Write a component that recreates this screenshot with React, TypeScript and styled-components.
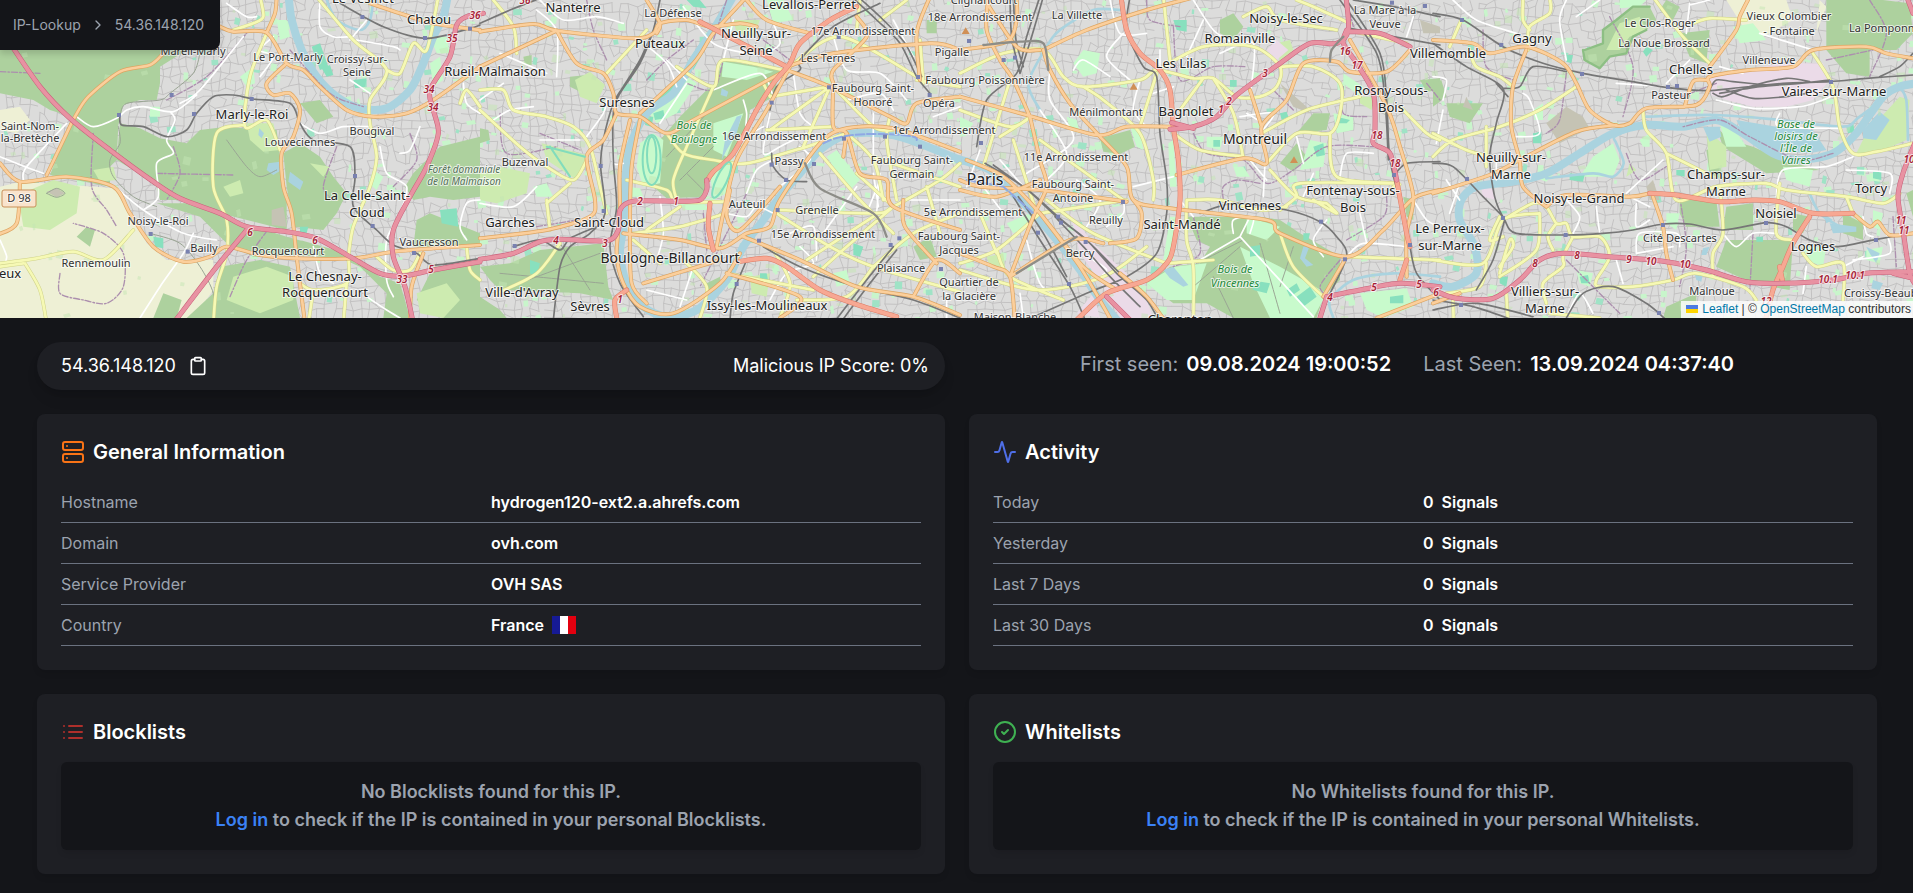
import React from "react";
import styled, { createGlobalStyle } from "styled-components";
import { Activity, ChevronRight, CircleCheck, Clipboard, Server } from "lucide-react";

const GlobalStyle = createGlobalStyle`
  *, *::before, *::after { box-sizing: border-box; }
  body {
    margin: 0;
    background: #141519;
    color: #fff;
    font-family: Inter, "Liberation Sans", sans-serif;
    font-size: 16px;
    line-height: 24px;
  }
`;

/* ---------- map data ---------- */

/* Map geometry is stored per sheet, three units to the pixel. */
type Layer =
  | "farm" | "forest" | "grass" | "park" | "pitch" | "yard" | "brown" | "lake"
  | "river" | "canal" | "motorway" | "trunk" | "primary" | "secondary"
  | "street" | "rail" | "viaduct" | "border" | "track";

type Sheet = {
  x: number;
  layers: Partial<Record<Layer, string[]>>;
  stations: string;
  peaks?: string;
};

const sheets: Sheet[] = [
  {
    x: 0,
    layers: {
      farm: [
        "0,560 60,545 350,565 400,650 440,730 500,780 640,780 640,870 580,954 0,954",
        "605,590 650,520 700,470 760,500 800,560 815,670 740,650 660,620",
        "0,330 60,320 90,360 50,400 0,390",
      ],
      forest: [
        "0,150 230,150 560,150 480,200 480,250 470,300 420,300 370,315 355,375 350,480 330,500 330,560 150,525 200,400 215,350 150,330 100,300 0,280",
        "360,370 420,385 480,415 560,430 600,390 680,380 730,385 830,390 840,470 860,600 860,690 660,640 560,600 480,600 470,560 400,510 350,480",
        "850,460 900,430 960,470 1000,530 1040,580 1010,640 970,690 880,680 860,560",
        "1240,520 1320,440 1440,410 1440,590 1360,600 1290,590 1240,600 1215,560",
        "470,610 560,610 700,660 860,710 1040,760 1040,775 880,765 760,770 680,730 600,650",
        "660,800 780,780 870,800 900,954 560,954 640,880",
        "900,720 1040,760 1140,830 1200,850 1230,954 1150,954 1160,880 1080,800",
        "490,880 545,900 530,954 460,954",
        "1250,660 1290,640 1440,700 1440,740 1240,740",
        "900,310 960,300 1000,350 950,370",
        "1300,800 1440,790 1440,954 1330,954 1250,900",
        "230,710 260,680 285,690 270,740",
      ],
      grass: [
        "60,620 90,570 160,540 240,560 230,640 150,690 70,680",
        "700,830 800,800 880,830 880,900 780,940 680,900",
        "740,370 820,370 840,450 790,455 750,420",
        "280,510 340,500 350,540 300,545",
        "1250,880 1340,850 1380,900 1330,954 1260,940",
        "670,560 720,540 730,580 690,590",
        "930,490 990,500 970,530",
      ],
      park: [
        "830,60 860,60 870,110 840,120", "1290,190 1320,170 1330,240 1300,260",
        "450,320 480,320 480,350 450,350", "1120,510 1150,530 1130,570 1105,550",
        "1290,110 1340,110 1350,160 1310,160", "720,230 760,200 765,250 740,260",
      ],
      pitch: [
        "935,140 960,130 985,200 960,210", "1060,240 1100,235 1095,260 1065,265",
        "1320,630 1370,625 1375,680 1325,670", "460,710 490,715 490,745 465,740",
        "900,680 925,680 920,700 900,700", "965,205 990,195 1000,225 980,230",
      ],
      brown: ["815,630 850,620 860,680 815,675", "140,575 170,565 195,580 170,592"],
      lake: [
        "805,490 840,485 845,510 820,525 800,510", "870,515 910,545 900,570 865,545",
        "778,385 792,400 785,415 775,405",
      ],
      river: ["865,-20 875,60 905,150 950,230 1010,290 1080,325 1160,325 1230,270 1270,190 1300,110 1330,50 1345,-20"],
      canal: ["980,0 1010,60 1080,90 1110,60 1120,0"],
      motorway: [
        "30,130 120,260 210,355 330,450 460,545 540,595 660,640 740,680 860,695 950,715 1050,770 1140,820 1210,828 1300,810 1440,785",
        "740,690 650,800 520,970",
        "1450,40 1400,50 1370,75 1350,170 1290,270 1300,330 1315,400 1280,500 1230,590 1180,690 1180,770 1215,860 1240,970",
      ],
      primary: [
        "0,490 60,545 200,530 340,560 390,640 460,740 550,785 630,770 680,740 780,765 880,775 1060,775 1180,755 1300,745 1440,735",
        "140,525 200,400 225,350 265,290 360,215 450,195 490,160",
        "660,80 700,95 800,98 860,190 910,210 960,260 1040,330 1120,350 1220,340 1300,300 1440,200",
        "800,98 825,40 830,-10",
        "860,190 800,250 820,285 870,280 900,330 880,410 845,460 850,560 875,640 890,770 915,970",
        "-10,705 50,670 60,545", "1110,10 1200,40 1300,70 1440,90",
        "1230,970 1235,860 1270,760",
      ],
      secondary: [
        "0,790 110,775 220,755 310,780 400,690", "75,790 120,870 140,970",
        "730,375 650,400 640,560 680,660 680,760 650,860 640,970",
        "800,100 750,230 735,380 800,360 840,450",
        "950,-10 1060,120 1160,210 1110,300 1110,370 1130,470 1110,560 1060,680 1045,770",
        "1160,210 1200,220 1240,130 1280,150 1315,-10",
        "900,850 940,870 1040,850 1045,770", "940,870 925,970", "1130,770 1180,810 1230,810 1260,760",
        "1040,850 1030,970", "780,-10 790,50 760,70 700,90", "1380,310 1400,270 1440,320",
        "1400,740 1410,810 1440,840", "0,800 70,790",
      ],
      street: [
        "70,540 80,500 200,370", "0,470 75,500 130,520", "230,350 280,380 350,355 380,330 430,320 520,335 590,285",
        "510,335 525,360 500,420 520,460 470,490 475,590 430,630",
        "350,565 430,630 550,700 650,720", "580,700 550,760 480,860 420,954",
        "900,370 960,400 1030,380 1110,380", "820,110 780,150 820,170 780,230",
        "1140,440 1160,520 1220,560 1200,640 1160,720 1160,840 1180,890", "680,10 740,50 770,50",
        "0,720 20,770 10,800", "1390,250 1400,310 1440,340", "1440,600 1400,610 1380,680 1400,720",
        "960,0 960,80 1000,110 1050,110", "1050,240 1110,280", "1070,120 1180,140 1200,150",
        "940,740 960,820 1000,850", "1100,890 1160,930 1200,954", "540,310 600,270 730,110",
        "1200,460 1230,450 1260,380", "1050,120 1100,60",
      ],
      rail: [
        "360,345 365,375 430,380 500,410 560,390 590,340 640,290 700,285 760,297 870,310 900,370 940,420 1050,440 1065,530 1060,620 1130,690 1180,735 1250,760 1300,795 1440,775",
        "1020,10 1150,80 1280,115 1410,85 1440,75",
      ],
      track: [
        "360,345 380,310 480,300 510,280 580,220 600,160", "355,380 360,430 330,480 340,530 400,590 470,620",
        "450,700 540,730 600,800 640,880 640,954", "680,420 740,500 780,530 830,510",
        "140,580 170,565 195,580 170,592 140,580",
      ],
      border: [
        "280,400 275,560 320,630 350,680", "470,520 700,525", "520,440 540,520 500,600",
        "180,820 180,880 250,900 320,910 370,860 370,760 310,700 220,670",
        "500,300 620,230 740,100", "690,890 740,780 810,680", "0,215 120,220", "1010,440 970,560 1000,600",
        "870,150 990,280 1090,320", "1230,400 1250,480 1180,560",
      ],
    },
    stations:
      "515,285 582,342 357,345 755,297 452,702 563,755 1065,528 1118,678 1242,759 1087,51 1275,114 1410,86",
  },
  {
    x: 1440,
    layers: {
      forest: [
        "730,180 900,210 880,290 810,330 800,400 760,470 690,530 680,590 560,595 520,560 540,420 600,350 680,270 700,260",
        "0,800 90,790 180,750 370,730 385,860 400,900 300,880 60,870 30,840",
        "0,890 60,930 80,954 0,954",
        "1300,740 1350,710 1370,770 1320,780", "1340,60 1370,60 1370,100 1340,100",
        "130,170 155,165 155,195 135,195", "270,230 320,225 310,280 270,260",
        "680,850 720,830 720,880 690,890", "0,385 25,390 30,420 0,430",
      ],
      grass: [
        "0,520 60,500 150,520 140,580 50,610 0,600", "285,240 330,215 375,255 350,310 300,290",
        "185,430 320,465 290,540 200,480", "760,60 840,60 820,110 770,100",
        "810,830 870,820 860,890 815,880",
      ],
      park: [
        "480,430 520,400 550,420 540,550 490,560 470,500", "730,185 820,200 880,215 800,240 725,230",
        "700,370 760,350 790,340 740,470 700,450", "690,520 760,470 740,580 700,600",
        "500,330 560,290 620,230 650,250 590,340 530,370", "1040,470 1070,450 1140,540 1110,570",
        "860,0 910,0 940,60 880,70", "590,610 670,610 690,630 620,630",
        "160,560 200,550 220,590 170,590", "1060,820 1100,810 1110,850 1070,860",
        "440,560 480,565 490,590 450,590",
      ],
      pitch: [
        "530,290 600,230 615,240 550,310", "620,190 660,130 680,140 640,210",
        "520,340 550,330 555,355 525,360", "840,820 860,820 865,845 840,845",
        "620,0 660,0 680,25 640,20", "150,780 180,790 170,830 150,820",
        "1120,730 1150,740 1140,770 1120,765", "500,350 520,350 515,380 495,375",
      ],
      lake: ["735,420 770,350 785,345 770,400 740,450 725,480", "725,265 745,275 740,290 722,285"],
      river: [
        "765,-20 700,90 640,180 580,280 500,340 450,440 435,560 430,680 420,760 440,850 490,920 560,950 650,930 740,840 790,740 850,660 900,590 960,520 1020,450 1100,405 1200,400 1290,420 1445,482",
      ],
      motorway: ["0,778 100,760 180,725 240,718 380,722 415,690 420,630 460,604 600,604 660,600 680,570 680,540"],
      trunk: [
        "680,545 700,515 760,460 830,330 880,250 930,190 960,130 1050,60 1130,20", "660,65 920,200",
        "690,610 685,680 700,750", "775,785 860,775 920,800 1020,870 1120,910 1250,950",
        "410,954 405,900 440,870",
      ],
      primary: [
        "0,95 160,72 230,92 460,115 520,100 540,70 620,60 690,80 780,70 830,80",
        "0,200 230,92", "230,92 290,190 370,220 400,280 410,340 480,350 560,400 640,360 920,210",
        "920,210 1050,260 1230,350 1280,370 1310,310 1440,290", "480,340 640,190 700,100 800,-10",
        "410,340 370,420 320,470 345,600 330,650 200,690 0,715",
        "450,360 420,500 420,640 410,760 430,850 480,920 580,940 720,850 780,760",
        "480,360 455,500 450,680 455,850 500,910",
        "930,200 860,330 770,480 730,640 710,740", "430,700 600,720 720,745 800,700 870,680 900,600 1020,430 1100,385 1240,385 1440,455",
        "750,570 740,650 780,690 900,560", "1060,250 1060,380 1100,400 1140,520 1220,540 1240,620 1440,690",
        "790,710 960,780 1130,860 1300,890 1440,945", "490,850 720,780", "740,820 960,890 900,954",
        "920,200 1060,160 1350,130 1440,150", "1060,250 1060,210 1160,110 1130,50",
        "1350,-10 1310,100 1320,240", "1300,890 1370,780 1440,820", "800,0 860,60 990,100",
        "500,0 540,70 530,100", "1270,600 1275,680 1370,790", "1100,400 1090,470",
      ],
      secondary: [
        "0,330 120,440 200,500 280,540 320,480", "0,270 70,270 100,330 200,350 280,380 330,440 360,560 380,640",
        "40,0 100,80 110,160", "560,400 610,460 700,480 800,490 980,440 1100,400", "700,260 620,440 580,540 590,600",
        "870,290 1050,260", "1050,260 870,390", "860,390 1060,380", "1050,260 970,440", "1060,260 1180,380 1240,390",
        "930,200 1080,110 1310,230", "850,250 870,290", "1100,400 1180,480 1210,600", "1020,460 1140,600 1240,700",
        "1130,520 1240,620", "900,630 1180,640 1240,620 1380,540 1440,490", "1000,830 1100,740 1240,620",
        "890,640 1050,740 1180,800 1440,875", "980,780 1180,650", "460,700 600,680 740,640",
        "460,720 540,790", "500,690 600,620", "740,820 1000,870", "880,750 930,850 900,954",
        "240,730 170,820 50,880", "1180,800 1300,700 1440,640", "200,600 210,690", "270,550 200,610",
        "1310,240 1440,260", "1320,120 1330,250", "440,540 560,570 590,605 730,605", "380,220 500,90",
        "590,200 700,260 730,180 910,210", "1140,0 1130,90", "1230,350 1220,420 1250,600", "1180,470 1440,560",
        "610,780 680,860 660,954", "1200,60 1280,0", "950,900 1100,890 1180,800", "1340,560 1380,700",
      ],
      street: [
        "230,230 230,92 170,30", "620,250 540,370", "700,270 840,220 880,290", "790,300 800,340 800,400 850,380",
        "800,580 830,510 880,480", "900,560 990,480 960,440", "730,180 760,60", "60,160 200,220", "320,410 370,340 380,300",
        "1180,340 1180,480", "1200,540 1160,640", "870,900 920,820 1000,790 960,740", "600,920 640,800",
        "540,590 550,700 530,780", "400,430 400,490 430,490", "40,360 90,330 160,320", "740,640 800,650 830,620 880,640",
        "870,340 850,460 900,440 980,400", "940,220 960,340 1000,380", "180,0 250,60 350,50 430,70",
        "0,300 70,250", "0,610 100,620 170,560", "500,870 620,900", "1060,110 1100,210 1200,220 1280,300",
        "1100,300 1200,280 1240,330", "1360,350 1440,320", "560,180 620,240", "610,20 700,130 800,160",
        "1240,60 1300,170", "930,700 1000,680 1010,780", "1290,600 1440,600", "300,420 180,420",
        "1180,520 1195,620", "1200,520 1190,640", "1400,880 1400,954", "1030,700 1130,560",
        "480,120 560,190 590,260", "860,160 900,130 880,70",
      ],
      rail: [
        "520,90 480,180 430,260 400,310 370,420 362,500 375,640 330,700 270,740 240,800 220,960",
        "540,0 520,90 480,190 420,280 400,340 400,480 410,620 390,740 420,850 490,950", "0,70 90,30 180,-5",
        "1240,740 1160,840 1060,970", "1250,750 1170,850 1080,970", "850,740 960,800 1130,860 1300,900 1440,954",
        "800,780 760,880 750,960", "100,740 180,720 240,750 270,715 350,680",
        "870,330 890,260 960,210 960,180 1060,80 1200,10", "875,460 880,500 920,540 980,545",
        "1125,0 1190,60 1260,130 1310,230 1350,280", "1145,0 1210,60 1275,130 1325,230",
      ],
      viaduct: ["975,490 1020,565 1180,640 1220,710"],
      track: ["60,820 370,850", "240,730 330,870", "600,540 700,440", "620,520 680,580", "560,470 690,330", "90,860 360,760"],
      border: [
        "320,0 340,90 380,180", "500,240 560,180 640,120", "60,340 80,460 230,440", "620,250 700,270 730,180",
        "170,680 290,660", "800,580 740,700 660,860", "740,0 700,120", "670,640 680,750", "850,120 930,180",
        "180,400 300,450",
      ],
    },
    stations:
      "362,498 371,633 104,738 875,308 1047,262 1076,111 1314,231 1349,285 1092,416 1215,410 1320,440 1002,492 875,494 918,540 893,630 837,722 770,852 1232,735 1258,715 1383,807",
  },
  {
    x: 2880,
    layers: {
      forest: [
        "680,650 900,650 960,660 1020,700 1140,770 1140,840 1090,890 1070,954 820,954 740,910 640,910 560,850 630,800 720,790 750,740 710,720",
        "780,60 820,40 850,80 820,120 780,100", "960,490 1010,430 1040,470 1000,515", "1010,400 1060,340 1110,340 1100,390",
        "420,415 510,390 525,440 480,462 430,455", "1330,590 1360,600 1360,660 1340,650", "1380,240 1440,235 1440,270 1400,275",
      ],
      grass: ["950,130 990,120 1000,150 960,190", "1200,290 1240,290 1235,330 1200,310", "80,770 130,760 135,800 90,800"],
      park: [
        "340,190 370,150 420,160 410,220 370,230", "560,850 640,800 740,790 700,900 620,900",
        "840,740 960,800 1100,880 1060,954 930,954 880,850", "860,650 960,680 920,720 860,700",
        "1120,340 1180,350 1180,390 1130,400", "1200,880 1340,865 1360,920 1270,954 1220,930",
        "140,670 210,640 220,670 160,700", "320,350 350,360 360,400 330,390", "820,500 850,500 870,530 830,530",
        "1020,510 1050,420 1100,430 1090,500", "1150,220 1210,260 1200,290 1150,250", "640,420 650,560 630,560 625,430",
        "740,410 790,410 780,450 740,440", "0,350 40,370 20,400 0,390", "510,380 540,390 550,450 530,440",
        "630,650 655,650 640,780 610,780",
      ],
      pitch: [
        "640,60 680,60 680,95 650,90", "810,240 830,240 830,260 810,260", "870,740 900,735 900,765 870,770",
        "1010,890 1050,860 1070,890 1030,920", "870,840 930,850 920,880 880,870", "1030,700 1050,700 1045,720 1030,720",
        "1060,440 1090,430 1095,465 1070,470", "1130,350 1170,360 1160,370 1130,370", "980,870 1010,850 1020,870 990,890",
        "1290,890 1330,885 1330,910 1290,910", "760,420 780,420 780,440 760,440", "960,340 980,335 985,350 965,360",
      ],
      brown: ["1380,60 1440,80 1440,100 1390,100", "960,250 1040,320 1050,340 1000,320"],
      yard: [
        "920,150 950,120 985,150 950,180", "330,640 400,730 500,820 560,900 580,954 480,954 430,860 360,760",
        "350,940 400,880 420,954",
      ],
      lake: ["610,810 640,800 685,855 670,860 630,835", "1030,740 1050,735 1035,775 1060,795 1040,800 1020,775"],
      river: ["-10,476 90,510 160,580 230,650 290,720 360,810 420,900 480,970"],
      canal: ["480,30 400,30 300,90 260,140 205,250 240,330", "1440,830 1300,820 1180,840 1110,900 1120,954"],
      motorway: [
        "630,388 700,380 770,350 830,285 960,190 1050,130 1130,130 1165,90 1158,-10",
        "635,368 700,385", "1160,90 1150,130 1190,190 1240,280 1245,390 1240,430 1290,460 1310,540",
        "1170,95 1260,100 1350,140", "1100,890 1200,870 1320,850 1440,860", "1075,970 1100,890",
        "440,890 520,970",
      ],
      trunk: [
        "483,-10 500,90 540,160 600,210 630,270 640,380 655,480 660,600 640,740 620,790 560,840 440,880 350,960",
        "1310,540 1340,700 1350,740", "1320,840 1340,780",
      ],
      primary: [
        "0,290 200,345 410,405 500,380 630,380", "210,350 160,240 120,180 80,90 85,-10", "250,150 380,90 560,30 690,-5",
        "250,150 270,210 330,310 420,410 500,500 520,600 630,625 920,660 960,700 1160,770 1270,690 1360,595 1440,570",
        "0,540 60,560 240,570 500,605", "650,525 850,475 920,490 905,380 980,300 1030,190 1130,185 1170,215 1280,215 1350,150",
        "905,380 870,270", "1170,120 1280,320 1320,440 1360,590 1340,700 1340,830", "1160,770 1090,890",
        "450,730 530,715 545,640 520,600", "210,350 240,480 260,560 220,650 150,830", "20,480 130,530 240,640 370,800 470,870",
        "0,570 110,590 240,540", "480,820 560,890 620,970", "150,830 330,720 430,730", "0,760 100,800 150,830 165,970",
        "1250,954 1440,880", "75,0 170,140 240,150", "0,150 140,125 170,60 170,0", "240,640 360,800 450,954",
      ],
      secondary: [
        "0,220 130,160 250,150 310,230 370,260 540,240 590,210 700,235 760,235 830,290 900,290 950,260 960,200 880,140 730,140 610,200",
        "610,-10 630,180", "0,330 150,380 210,350", "370,260 430,300 540,400 580,540 580,600", "760,235 820,340 850,475",
        "640,400 720,450 850,470", "660,330 730,235", "920,490 1010,400 1110,400 1140,340 1140,250 1060,200 960,200",
        "905,400 1040,330 1200,290", "1110,400 1130,530 1310,550 1300,560", "930,510 1010,590 1100,610",
        "1310,550 1020,550 1010,590 960,630", "240,640 500,600", "240,420 490,600", "260,600 400,700 620,790",
        "0,790 110,750 240,640", "110,750 150,830 310,900", "70,500 150,240", "120,410 200,360",
        "0,810 230,870 430,830 560,740", "680,600 680,720 700,800 700,970", "680,600 780,600 900,630 980,620",
        "960,700 1000,800 1090,890", "620,790 760,780", "1160,770 1440,780", "1160,90 1340,130", "850,50 920,20 960,60 1130,90",
        "1320,320 1400,400 1440,420", "590,220 540,380", "60,640 110,760", "1010,0 1060,20 1170,70",
        "160,420 230,640", "0,640 90,640", "1100,610 1130,640 1060,600",
      ],
      street: [
        "270,210 270,300 340,420 200,520", "600,150 600,200", "490,100 440,170 510,240", "730,60 680,170",
        "780,160 880,130 870,290", "840,350 940,340 900,400", "915,490 910,590", "840,710 720,780", "840,710 1060,950",
        "870,650 840,710", "1240,460 1160,460 1140,530", "1010,410 1030,490", "1100,660 1060,720 1090,770",
        "1160,770 1210,730 1340,740", "520,560 640,530", "240,330 320,460 260,540", "490,600 490,640 440,680",
        "70,560 130,640", "60,450 20,560", "340,210 370,180 450,230", "700,0 760,90 820,130", "450,0 480,100 560,100",
        "860,340 910,370", "580,280 640,260", "350,540 420,600 380,680", "180,880 190,954", "1200,640 1220,730",
        "200,720 240,850 300,900", "540,240 520,330 560,380", "1030,590 1060,520", "1360,600 1400,660 1440,680",
        "1360,50 1340,110", "820,700 820,660 880,650 870,700", "120,480 190,560", "870,480 920,540", "660,600 700,650",
        "400,780 440,810 410,840",
      ],
      rail: [
        "240,-10 200,110 170,220 80,300 50,440", "250,-10 215,110 180,220", "150,-10 155,110 180,220", "160,-10 168,120 190,200",
        "510,-10 500,90 550,200 590,230 600,400 620,540 620,640 590,760 500,830 380,880 200,960",
        "75,490 190,560 290,650 380,720 470,820 560,900 600,970", "100,495 210,575 300,655 390,730 480,820 580,910",
        "285,650 370,740 450,830 540,920", "160,590 240,720 330,860 380,970", "175,590 250,700 320,830",
        "720,640 820,610 980,630 1080,665 1130,710 1160,770 1100,900", "1160,0 1260,160 1280,300 1290,480 1330,640 1350,740 1370,820 1440,900",
        "1140,0 1250,160 1275,300 1285,480", "1180,0 1300,20 1440,50", "1170,85 1300,110 1440,135", "1300,530 1340,490 1440,485",
      ],
      viaduct: ["70,135 180,125 250,130 265,210", "170,820 350,710", "1110,185 1115,150 1150,110"],
      track: ["760,830 820,954", "710,790 850,720", "900,730 960,940", "700,860 840,740", "1000,740 960,860"],
      border: [
        "560,0 570,60 660,80", "640,80 660,240 760,200 860,200", "700,400 740,460 850,480 920,550 1000,510 1100,440 1240,440",
        "790,600 790,560 830,540 900,550", "1160,0 1180,80", "700,650 720,760 640,800", "1150,260 1150,340 1220,350",
        "1140,780 1080,860 1120,900", "1280,590 1270,650 1160,720", "1400,250 1440,300", "940,270 1000,330",
      ],
    },
    stations:
      "131,180 165,173 27,123 63,429 489,606 303,668 294,650 377,726 234,698 327,852 1083,665 1155,778 1302,525 1350,735 1296,8 1395,18",
    peaks: "17,93 521,260 1002,480",
  },
  {
    x: 4299,
    layers: {
      farm: ["880,0 1060,0 1080,60 990,110 930,80", "540,80 600,80 590,130 540,130", "1160,0 1180,20 1150,100"],
      forest: [
        "550,60 600,20 650,20 670,60 640,90 600,110 580,160 530,170 500,205 450,180 455,150 510,130 510,90",
        "1180,0 1350,0 1360,80 1310,150 1310,230 1240,220 1180,150", "1350,0 1430,10 1440,100 1390,150 1310,150",
        "40,310 150,310 110,370 50,350", "740,100 830,90 820,190 770,170", "850,380 890,420 960,440 1050,480 1160,510 1000,520 870,440",
        "880,620 960,610 960,690 870,690", "880,720 1080,720 1070,870 960,850 850,800", "740,590 850,600 860,680 760,680 740,640",
        "700,920 790,880 790,954 690,954", "1420,580 1440,570 1440,650", "700,0 740,20 720,60 680,30",
        "1080,640 1130,650 1110,700 1080,690", "820,450 850,440 870,540 830,520", "1230,640 1290,670 1290,720 1230,700",
        "0,250 25,240 40,290 0,320",
      ],
      grass: [
        "560,70 620,50 640,90 590,110 560,150 520,150", "820,390 880,440 880,500 830,510",
        "1270,460 1300,400 1400,290 1430,300 1420,420 1330,460", "590,490 610,510 580,530",
      ],
      park: [
        "480,470 540,430 560,480 540,530 440,530", "300,530 360,525 340,545", "860,370 900,380 940,440 880,440",
        "1050,500 1140,510 1130,560 1060,540", "1110,740 1180,740 1170,800 1120,780", "300,330 330,310 330,360 305,360",
        "620,420 650,400 650,440 630,440", "700,640 740,640 730,690 700,670", "1320,630 1350,640 1340,690 1320,680",
        "900,80 960,70 1000,120 920,130", "1310,520 1340,520 1340,545 1310,540", "430,810 480,820 470,860 440,850",
        "1300,750 1350,740 1340,790 1300,780", "560,0 640,0 620,20 560,25",
      ],
      pitch: [
        "300,400 325,395 325,430 300,430", "410,520 455,525 450,545 410,540", "1240,380 1260,365 1265,395 1245,400",
        "640,140 660,150 640,170 630,155", "1320,515 1345,515 1345,540 1320,535", "200,830 225,830 220,860 200,850",
        "970,710 990,710 990,725 970,725", "400,165 420,165 415,190 400,185", "730,510 755,510 755,530 730,525",
        "440,830 465,825 470,850 445,850",
      ],
      yard: ["830,230 900,215 1050,190 1170,190 1190,240 1140,300 1060,320 960,320 880,300 835,285", "140,540 180,570 190,600 150,590"],
      brown: ["340,370 400,320 450,350 470,385 380,430", "100,290 120,330 90,320", "640,560 660,540 680,600 650,600"],
      lake: [
        "910,360 1030,380 1140,390 1180,450 1130,460 1000,450 930,400", "1290,390 1340,335 1370,360 1330,420 1290,415",
        "810,380 860,380 865,410 830,425", "810,745 830,740 820,765 805,765", "1320,840 1350,850 1340,870 1315,865",
        "785,820 810,820 805,845 790,840", "1170,640 1200,660 1180,670", "1190,670 1270,680 1270,695 1200,700",
        "1300,740 1340,760 1330,790 1310,760",
      ],
      river: [
        "0,850 60,860 130,820 125,740 80,660 85,600 130,560 240,545 340,520 440,460 540,400 640,375 750,380 850,360 930,400 1020,460 1100,480 1200,460 1270,400 1350,290 1400,260 1450,250",
      ],
      canal: [
        "640,350 850,345 1040,360 1230,380 1280,350 1400,260", "340,535 480,520 540,530 572,490 550,430 545,410 600,385",
        "1400,260 1420,300 1425,420", "1130,580 1160,640 1220,680",
      ],
      motorway: [
        "0,870 70,895 180,895 260,840 320,780 390,760 530,770 700,785 820,810 940,845 1050,850 1200,840 1300,820 1450,815",
        "1445,430 1410,520 1395,590 1410,690 1430,820 1445,850", "1425,0 1440,40", "1380,820 1440,835",
      ],
      trunk: ["650,580 730,585 860,605 960,600 1040,605 1140,640 1260,640", "1130,650 1080,730 1050,800 1020,870 995,970", "1040,800 1050,850"],
      primary: [
        "0,120 120,130 170,160 280,140 390,190 430,250 470,330 540,375 590,370 640,325 790,315 830,260 830,230 950,210 1080,200 1140,150 1300,140 1360,160 1440,175",
        "755,320 780,245 820,240", "830,200 910,90 920,50 950,-10", "280,150 240,260 235,380 260,480 270,560 340,620",
        "0,580 170,525 260,480 430,395 550,375", "340,620 400,585 590,590 650,580", "660,590 690,680 700,760 720,840",
        "1260,640 1310,680 1335,665 1370,705 1440,700", "0,910 80,880",
      ],
      secondary: [
        "660,-10 750,110 830,190", "780,70 830,55 940,60", "350,-10 350,40 290,80 285,150", "85,60 50,140",
        "270,0 270,60 290,90", "110,150 130,200 200,230 240,260", "430,260 320,330 200,380 60,420 0,470", "0,400 100,450 170,470",
        "630,330 640,390 700,460 730,600 850,560 1000,550 1060,570 1240,590 1350,610 1400,580", "700,460 840,530",
        "1140,160 1200,260 1220,380 1260,460 1330,455 1440,430", "1040,550 1030,700 1080,720", "860,560 870,700 840,760 840,830",
        "210,660 300,610 340,620 370,670 400,670 420,710 500,710 530,770 490,840 500,860 600,860 720,840 790,820 930,860 970,900",
        "0,780 150,790 210,660 320,640", "210,710 170,720 200,650", "370,670 345,710 360,750", "420,710 390,770 390,800 330,850 340,910",
        "200,820 230,720 240,740 200,800", "1110,760 1150,800 1230,790 1230,900", "1240,590 1260,640", "225,970 220,880",
        "40,880 140,860 160,790", "62,970 60,890", "160,380 160,500", "350,940 500,954", "320,640 310,750 200,830",
      ],
      street: [
        "400,0 380,60 400,180", "770,10 760,100", "770,15 830,0", "690,480 580,580", "610,760 620,700 730,700 740,740",
        "850,300 960,325 1100,320 1170,300 1210,280", "1030,590 1050,510 1180,500 1260,470", "1120,800 1110,880",
        "870,700 910,740 960,700 1030,700", "490,620 500,700", "550,780 570,850", "60,0 130,60 250,100",
        "250,410 320,400 290,300 270,280", "0,230 40,240 30,300", "10,430 30,330", "400,954 440,880 480,940",
        "1260,780 1370,760 1360,700", "590,590 650,620", "80,550 50,640", "700,250 770,180", "860,200 930,220",
        "1240,510 1370,520 1370,580", "1290,650 1300,700 1320,710", "610,760 720,740", "550,250 700,260", "980,100 1140,150",
        "1040,340 1040,380 1220,385", "1230,800 1290,770", "400,600 440,650 420,700", "40,540 80,600", "610,610 610,680 650,660",
        "190,480 190,540", "500,0 430,50",
      ],
      rail: [
        "0,40 90,60 210,140 330,190 450,220 600,245 700,262 820,272 900,265 1050,250 1190,245 1300,235 1440,225",
        "830,270 850,240 900,245 1000,255", "840,280 870,290 950,260 1060,235 1130,245",
        "880,270 960,295 1060,290 1120,280", "860,280 980,260 1100,250 1190,240", "1340,230 1400,200 1440,160",
        "0,130 100,200 210,265 190,370 170,470 185,590 215,660 250,700 400,705 510,700 600,690 690,672 770,672 870,690 1000,668 1060,680 1130,720 1210,740 1330,718 1440,700",
        "210,265 260,260 300,200 400,215", "0,490 60,500 150,590 210,650", "215,660 180,780 130,870",
        "400,954 450,880 540,860 640,910 700,960", "0,900 120,920 240,960", "0,930 130,910 300,950", "190,250 225,290",
      ],
      border: [
        "150,90 160,200 240,240", "400,220 380,360 340,400", "530,50 600,200 570,350", "580,460 620,540 700,500",
        "960,700 950,880", "740,590 760,740 740,860", "1180,180 1320,150", "1200,460 1100,480 950,410 860,360 750,380",
        "1310,0 1360,100 1310,230", "1380,650 1390,800", "400,780 480,860 560,940", "850,250 720,300",
      ],
    },
    stations:
      "87,60 205,135 447,222 705,261 732,258 1194,246 102,537 210,654 398,705 690,675 999,669 1329,720 84,915 678,939",
  },
];

type LabelKind = "capital" | "city" | "town" | "village" | "wood" | "forest" | "exit";
type Label = [text: string, x: number, y: number, kind?: LabelKind];

/* Names carry their centre in map pixels. */
const labels: Label[] = [
  ["Le Vésinet", 363, -2, "town"], ["Chatou", 429, 19, "town"], ["Mareil-Marly", 193, 51],
  ["Le Port-Marly", 288, 57], ["Croissy-sur-", 357, 59], ["Seine", 357, 72], ["Marly-le-Roi", 252, 114, "town"],
  ["Saint-Nom-", 30, 126], ["la-Bretèche", 30, 138], ["Bougival", 372, 131], ["Louveciennes", 300, 142],
  ["La Celle-Saint-", 367, 195, "town"], ["Cloud", 367, 212, "town"], ["Noisy-le-Roi", 158, 221],
  ["Bailly", 204, 248], ["Rennemoulin", 96, 263], ["Rocquencourt", 288, 251], ["Vaucresson", 429, 242],
  ["eux", 10, 273, "town"], ["Le Chesnay-", 325, 276, "town"], ["Rocquencourt", 325, 292, "town"],
  ["Forêt domaniale", 464, 169, "forest"], ["de la Malmaison", 464, 181, "forest"],
  ["Nanterre", 573, 7, "town"], ["La Défense", 673, 13], ["Levallois-Perret", 809, 4, "town"],
  ["Rueil-Malmaison", 495, 71, "town"], ["Puteaux", 660, 43, "town"], ["Neuilly-sur-", 756, 33, "town"],
  ["Seine", 756, 50, "town"], ["17e Arrondissement", 863, 31], ["Les Ternes", 828, 58],
  ["18e Arrondissement", 980, 17], ["Pigalle", 952, 52], ["Suresnes", 627, 102, "town"],
  ["Faubourg Saint-", 873, 88], ["Honoré", 873, 102], ["Faubourg Poissonnière", 985, 80], ["Opéra", 939, 103],
  ["Bois de", 694, 125, "wood"], ["Boulogne", 694, 139, "wood"], ["16e Arrondissement", 774, 136],
  ["1er Arrondissement", 944, 130], ["Buzenval", 525, 162], ["Passy", 789, 161], ["Faubourg Saint-", 912, 160],
  ["Germain", 912, 174], ["Auteuil", 747, 204], ["Grenelle", 817, 210], ["5e Arrondissement", 973, 212],
  ["Garches", 510, 222, "town"], ["Saint-Cloud", 609, 222, "town"], ["15e Arrondissement", 823, 234],
  ["Faubourg Saint-", 959, 236], ["Jacques", 959, 250], ["Boulogne-Billancourt", 670, 258, "city"],
  ["Plaisance", 901, 268], ["Ville-d'Avray", 522, 292, "town"], ["Sèvres", 590, 306, "town"],
  ["Issy-les-Moulineaux", 767, 305, "town"], ["Quartier de", 969, 282], ["la Glacière", 969, 296],
  ["Clignancourt", 984, 0], ["La Villette", 1077, 15], ["Noisy-le-Sec", 1286, 18, "town"], ["Romainville", 1240, 38, "town"],
  ["La Mare à la", 1385, 10], ["Veuve", 1385, 24], ["Les Lilas", 1181, 63, "town"], ["Ménilmontant", 1106, 112],
  ["Bagnolet", 1186, 111, "town"], ["Rosny-sous-", 1391, 90, "town"], ["Bois", 1391, 107, "town"],
  ["Montreuil", 1255, 139, "city"], ["11e Arrondissement", 1076, 157], ["Paris", 985, 179, "capital"],
  ["Faubourg Saint-", 1073, 184], ["Antoine", 1073, 198], ["Fontenay-sous-", 1353, 190, "town"],
  ["Bois", 1353, 207, "town"], ["Vincennes", 1250, 205, "town"], ["Reuilly", 1106, 220],
  ["Saint-Mandé", 1182, 224, "town"], ["Bercy", 1080, 253], ["Bois de", 1235, 269, "wood"], ["Vincennes", 1235, 283, "wood"],
  ["Maison-Blanche", 1015, 317], ["Charenton", 1180, 319, "town"], ["Villemomble", 1448, 53, "town"],
  ["Le Perreux-", 1450, 228, "town"], ["sur-Marne", 1450, 245, "town"],
  ["Gagny", 1532, 38, "town"], ["Le Clos-Roger", 1660, 23], ["La Noue Brossard", 1664, 43],
  ["Vieux Colombier", 1789, 16], ["- Fontaine", 1789, 31], ["La Pomponnette", 1892, 28], ["Villeneuve", 1769, 60],
  ["Chelles", 1691, 69, "town"], ["Pasteur", 1671, 95], ["Vaires-sur-Marne", 1834, 91, "town"],
  ["Base de", 1796, 124, "wood"], ["loisirs de", 1796, 136, "wood"], ["l'Île de", 1796, 148, "wood"], ["Vaires", 1796, 160, "wood"],
  ["Neuilly-sur-", 1511, 157, "town"], ["Marne", 1511, 174, "town"], ["Noisy-le-Grand", 1579, 198, "town"],
  ["Champs-sur-", 1726, 174, "town"], ["Marne", 1726, 191, "town"], ["Torcy", 1871, 188, "town"],
  ["Noisiel", 1776, 213, "town"], ["Cité Descartes", 1680, 238], ["Lognes", 1813, 246, "town"],
  ["Villiers-sur-", 1545, 291, "town"], ["Marne", 1545, 308, "town"], ["Malnoue", 1712, 291], ["Croissy-Beaubourg", 1893, 293],
  ["36", 475, 15, "exit"], ["35", 452, 38, "exit"], ["34", 429, 89, "exit"], ["34", 433, 107, "exit"],
  ["6", 250, 232, "exit"], ["6", 315, 240, "exit"], ["5", 431, 269, "exit"], ["33", 402, 279, "exit"],
  ["36", 525, 0, "exit"], ["2", 640, 201, "exit"], ["1", 676, 201, "exit"], ["4", 556, 240, "exit"],
  ["3", 605, 243, "exit"], ["1", 620, 299, "exit"], ["3", 1265, 73, "exit"], ["2", 1229, 101, "exit"],
  ["1", 1221, 109, "exit"], ["16", 1345, 51, "exit"], ["17", 1357, 65, "exit"], ["18", 1377, 135, "exit"],
  ["18", 1395, 163, "exit"], ["4", 1330, 297, "exit"], ["5", 1374, 287, "exit"], ["5", 1419, 284, "exit"],
  ["6", 1436, 292, "exit"], ["8", 1535, 263, "exit"], ["8", 1577, 255, "exit"], ["9", 1629, 259, "exit"],
  ["10", 1651, 261, "exit"], ["10", 1685, 264, "exit"], ["10.1", 1828, 279, "exit"], ["10.1", 1855, 275, "exit"],
  ["11", 1901, 220, "exit"], ["11", 1904, 230, "exit"], ["12", 1766, 301, "exit"], ["10", 1909, 159, "exit"],
];

/* ---------- map drawing ---------- */

const areaColors: [Layer, string][] = [
  ["farm", "#eef0d5"], ["forest", "#add19e"], ["grass", "#cdebb0"], ["park", "#c8facc"],
  ["yard", "#ebdbe8"], ["brown", "#c5c3b4"], ["pitch", "#88e0be"], ["lake", "#aad3df"],
];

const lineStyles: { layer: Layer; color: string; width: number; dash?: string }[] = [
  { layer: "river", color: "#aad3df", width: 24 },
  { layer: "canal", color: "#aad3df", width: 8 },
  { layer: "track", color: "#9aa594", width: 3 },
  { layer: "border", color: "#ac8fae", width: 4, dash: "18 6 5 6" },
  { layer: "street", color: "#ffffff", width: 5 },
  { layer: "secondary", color: "#cfd28a", width: 11 },
  { layer: "secondary", color: "#f6f9b4", width: 8 },
  { layer: "rail", color: "#767676", width: 5 },
  { layer: "primary", color: "#dda562", width: 12 },
  { layer: "primary", color: "#fbcf9c", width: 8 },
  { layer: "trunk", color: "#dd7c66", width: 15 },
  { layer: "trunk", color: "#f7a893", width: 12 },
  { layer: "motorway", color: "#c9607a", width: 15 },
  { layer: "motorway", color: "#e892a2", width: 12 },
  { layer: "viaduct", color: "#8d8d88", width: 7 },
];

type Point = [number, number];

const parse = (text: string): Point[] =>
  text.split(" ").map((pair) => pair.split(",").map(Number) as Point);

/* Catmull-Rom curve through the points, for roads, rivers and rails. */
function curve(text: string): string {
  const p = parse(text);
  let d = `M${p[0]}`;
  for (let i = 0; i < p.length - 1; i++) {
    const a = p[i - 1] ?? p[i];
    const b = p[i];
    const c = p[i + 1];
    const e = p[i + 2] ?? c;
    const c1 = [b[0] + (c[0] - a[0]) / 7, b[1] + (c[1] - a[1]) / 7];
    const c2 = [c[0] - (e[0] - b[0]) / 7, c[1] - (e[1] - b[1]) / 7];
    d += `C${c1} ${c2} ${c}`;
  }
  return d;
}

const polygon = (text: string) => `M${text.split(" ").join("L")}Z`;

function random(seed: number) {
  let state = seed;
  return () => {
    state = (state * 1664525 + 1013904223) % 4294967296;
    return state / 4294967296;
  };
}

/* Fine net of side streets: a jittered lattice with some links left out. */
function sideStreets(): string {
  const next = random(7);
  const step = 25;
  const cols = 232;
  const rows = 40;
  const node: Point[][] = [];
  for (let r = 0; r < rows; r++) {
    node.push([]);
    for (let c = 0; c < cols; c++) {
      const lean = Math.sin(c / 17 + r / 9) * 16;
      node[r].push([
        Math.round(c * step + lean + (next() - 0.5) * 16),
        Math.round(r * step + Math.cos(c / 13) * 18 + (next() - 0.5) * 16),
      ]);
    }
  }
  let d = "";
  for (let r = 0; r < rows - 1; r++) {
    for (let c = 0; c < cols - 1; c++) {
      if (next() < 0.8) d += `M${node[r][c]}L${node[r][c + 1]}`;
      if (next() < 0.8) d += `M${node[r][c]}L${node[r + 1][c]}`;
    }
  }
  return d;
}

/* Small squares and gardens scattered over the built-up area. */
function gardens(seed: number, count: number): string {
  const next = random(seed);
  let d = "";
  for (let i = 0; i < count; i++) {
    const x = Math.round(next() * 5739);
    const y = Math.round(next() * 954);
    const w = 6 + Math.round(next() * 20);
    const h = 6 + Math.round(next() * 18);
    const s = Math.round(next() * 10 - 5);
    d += `M${x},${y}l${w},${s}l${-s},${h}l${-w},${-s}Z`;
  }
  return d;
}

const sideStreetPath = sideStreets();
const gardenPath = gardens(11, 620);
const groundPath = gardens(29, 220);
const lawnPath = gardens(43, 260);

const labelSizes: Record<LabelKind, number> = {
  capital: 16, city: 14, town: 13, village: 11, wood: 11, forest: 10, exit: 10,
};

const labelColors: Record<LabelKind, string> = {
  capital: "#222", city: "#222", town: "#222", village: "#333", wood: "#1f8a3b", forest: "#55705a", exit: "#a51d36",
};

const baseline: Record<LabelKind, number> = {
  capital: 6, city: 5, town: 5, village: 4, wood: 4, forest: 4, exit: 4,
};

const MapLabel = styled.text<{ $kind: LabelKind }>`
  font-family: "Noto Sans", sans-serif;
  font-size: ${({ $kind }) => labelSizes[$kind]}px;
  font-style: ${({ $kind }) => ($kind === "wood" || $kind === "forest" || $kind === "exit" ? "italic" : "normal")};
  font-weight: ${({ $kind }) => ($kind === "exit" ? 600 : 400)};
  fill: ${({ $kind }) => labelColors[$kind]};
  stroke: rgba(255, 255, 255, 0.7);
  stroke-width: 2px;
  stroke-linejoin: round;
  paint-order: stroke;
  text-anchor: middle;
`;

const MapDrawing = React.memo(function MapDrawing() {
  return (
    <svg viewBox="0 0 1913 318" preserveAspectRatio="xMidYMid slice" role="img" aria-label="Map of Paris">
      <rect width="1913" height="318" fill="#dcdcdb" />
      <g transform="scale(0.33333)" fill="none" strokeLinecap="round" strokeLinejoin="round">
        <path d={sideStreetPath} stroke="#c3c2c2" strokeWidth="3" />
        <path d={gardenPath} fill="#c8f5cb" />
        <path d={groundPath} fill="#9fe3c6" />
        {areaColors.map(([layer, color]) =>
          sheets.map((sheet) => (
            <path
              key={layer + sheet.x}
              transform={`translate(${sheet.x} 0)`}
              d={(sheet.layers[layer] ?? []).map(polygon).join("")}
              fill={color}
            />
          )),
        )}
        <path d={lawnPath} fill="#c3e6b4" opacity="0.5" />
        {lineStyles.map((style, index) =>
          sheets.map((sheet) => (
            <path
              key={index + "-" + sheet.x}
              transform={`translate(${sheet.x} 0)`}
              d={(sheet.layers[style.layer] ?? []).map(curve).join("")}
              stroke={style.color}
              strokeWidth={style.width}
              strokeDasharray={style.dash}
            />
          )),
        )}
        <g stroke="#82dcbc" strokeWidth="6">
          <ellipse cx="1955" cy="480" rx="27" ry="75" />
          <ellipse cx="1955" cy="465" rx="14" ry="55" />
          <ellipse cx="2165" cy="540" rx="16" ry="58" transform="rotate(25 2165 540)" />
          <path d="M1650,440L1710,530M1640,440L1755,470" />
        </g>
        <path d="M2470,430Q2520,400 2640,402T2750,420M2900,540L3010,560L3100,640" stroke="#8fa8e4" strokeWidth="6" strokeDasharray="26 8" />
        <path
          d="M4749,150L4754,180L4799,205L4829,170L4879,160L4899,110L4939,90M4754,150L4809,130L4809,90L4849,60L4899,20L4949,20"
          stroke="#8dbf84"
          strokeWidth="7"
        />
        {sheets.map((sheet) => (
          <g key={sheet.x} transform={`translate(${sheet.x} 0)`}>
            {parse(sheet.stations).map(([x, y]) => (
              <rect key={`${x}-${y}`} x={x - 6} y={y - 6} width="12" height="12" fill="#7981b0" />
            ))}
            {sheet.peaks &&
              parse(sheet.peaks).map(([x, y]) => (
                <path key={x} d={`M${x - 12},${y + 9}l12,-20l12,20Z`} fill="#d08f55" />
              ))}
          </g>
        ))}
      </g>
      <rect x="2" y="190" width="34" height="17" rx="2" fill="#f9e3cc" stroke="#c98f59" />
      <MapLabel $kind="village" x="19" y="202">D 98</MapLabel>
      {labels.map(([text, x, y, kind = "village"]) => (
        <MapLabel key={`${text}-${x}-${y}`} $kind={kind} x={x} y={y + baseline[kind]}>
          {text}
        </MapLabel>
      ))}
    </svg>
  );
});

/* ---------- page parts ---------- */

const MapArea = styled.section`
  position: relative;
  height: 318px;
  overflow: hidden;

  > svg {
    display: block;
    width: 100%;
    height: 100%;
  }
`;

const Breadcrumb = styled.nav`
  position: absolute;
  top: 0;
  left: 0;
  display: flex;
  align-items: center;
  gap: 9px;
  padding: 15px 16px 15px 13px;
  border-bottom-right-radius: 8px;
  background: #141519;
  box-shadow: 0 4px 6px rgba(0, 0, 0, 0.15);
  color: #9ca3af;
  font-size: 14px;
  line-height: 20px;
`;

const CrumbLink = styled.a`
  color: inherit;
  text-decoration: none;
`;

const Attribution = styled.div`
  position: absolute;
  right: 0;
  bottom: 0;
  padding: 0 2px 0 5px;
  background: rgba(255, 255, 255, 0.8);
  color: #333;
  font-family: "Liberation Sans", Arial, sans-serif;
  font-size: 12px;
  line-height: 17px;

  a {
    color: #0078a8;
    text-decoration: none;
  }

  svg {
    width: 12px;
    height: 8px;
    margin-right: 4px;
  }
`;

const Content = styled.main`
  display: grid;
  grid-template-columns: 1fr 1fr;
  gap: 24px;
  padding: 24px 36px 16px 37px;
`;

const AddressBar = styled.div`
  display: flex;
  align-items: center;
  height: 48px;
  padding: 0 16px 0 24px;
  border-radius: 24px;
  background: #1e1f24;
  box-shadow: 0 10px 15px -3px rgba(0, 0, 0, 0.1), 0 4px 6px -2px rgba(0, 0, 0, 0.1);
  font-size: 18px;
  line-height: 28px;
`;

const CopyButton = styled.button`
  display: flex;
  margin: 0 auto 0 12px;
  padding: 0;
  border: 0;
  background: none;
  color: #fff;
  cursor: pointer;
`;

const SeenDates = styled.div`
  display: flex;
  justify-content: center;
  padding-top: 8px;
  font-size: 20px;
  line-height: 28px;
`;

const SeenItem = styled.div`
  display: flex;
  gap: 8px;
  margin-right: 32px;
  color: #9ca3af;
  white-space: nowrap;

  strong {
    color: #fff;
    font-weight: 600;
  }
`;

const Card = styled.section`
  padding: 24px;
  border-radius: 8px;
  background: #1e1f24;
  box-shadow: 0 4px 6px -1px rgba(0, 0, 0, 0.1);
`;

const CardTitle = styled.h2<{ $iconColor: string }>`
  display: flex;
  align-items: center;
  gap: 8px;
  margin: 0 0 16px;
  font-size: 20px;
  font-weight: 600;
  line-height: 28px;

  svg { color: ${({ $iconColor }) => $iconColor}; }
`;

const InfoTable = styled.table`
  width: 100%;
  border-collapse: separate;
  border-spacing: 0;
  table-layout: fixed;

  th, td {
    padding: 8px 0;
    border-bottom: 1px solid #6b7280;
    text-align: left;
  }

  th {
    color: #9ca3af;
    font-weight: 400;
  }

  td { font-weight: 600; }
`;

const Value = styled.span`
  display: flex;
  align-items: center;
  gap: 8px;
`;

const Notice = styled.p`
  margin: 0;
  padding: 16px;
  border-radius: 6px;
  background: #141519;
  box-shadow: 0 4px 6px -1px rgba(0, 0, 0, 0.1);
  color: #9ca3af;
  font-size: 18px;
  font-weight: 600;
  line-height: 28px;
  text-align: center;
`;

const LoginLink = styled.a`
  color: #3b82f6;
  text-decoration: none;
`;

const ListIcon = () => (
  <svg width="24" height="24" viewBox="0 0 24 24" fill="none" stroke="currentColor" strokeWidth="2" strokeLinecap="round" aria-hidden="true">
    <path d="M8 6h13M8 12h13M8 18h13M3 6h.01M3 12h.01M3 18h.01" />
  </svg>
);

const FrenchFlag = () => (
  <svg width="24" height="18" viewBox="0 0 24 18" role="img" aria-label="Flag of France">
    <rect width="8" height="18" fill="#161a95" />
    <rect x="8" width="8" height="18" fill="#fff" />
    <rect x="16" width="8" height="18" fill="#e3000f" />
  </svg>
);

const generalRows: [string, React.ReactNode][] = [
  ["Hostname", "hydrogen120-ext2.a.ahrefs.com"],
  ["Domain", "ovh.com"],
  ["Service Provider", "OVH SAS"],
  ["Country", <Value key="country">France <FrenchFlag /></Value>],
];

const activityRows: [string, React.ReactNode][] = ["Today", "Yesterday", "Last 7 Days", "Last 30 Days"].map(
  (period) => [period, <Value key={period}><span>0</span><span>Signals</span></Value>],
);

const Rows = ({ rows }: { rows: [string, React.ReactNode][] }) => (
  <InfoTable>
    <tbody>
      {rows.map(([name, value]) => (
        <tr key={name}>
          <th scope="row">{name}</th>
          <td>{value}</td>
        </tr>
      ))}
    </tbody>
  </InfoTable>
);

const EmptyList = ({ name }: { name: string }) => (
  <Notice>
    No {name} found for this IP.
    <br />
    <LoginLink href="#login">Log in</LoginLink> to check if the IP is contained in your personal {name}.
  </Notice>
);

export default function App() {
  return (
    <>
      <GlobalStyle />
      <MapArea>
        <MapDrawing />
        <Breadcrumb aria-label="Breadcrumb">
          <CrumbLink href="#lookup">IP-Lookup</CrumbLink>
          <ChevronRight size={16} aria-hidden="true" />
          <CrumbLink href="#address">54.36.148.120</CrumbLink>
        </Breadcrumb>
        <Attribution>
          <svg viewBox="0 0 12 8" aria-hidden="true">
            <path fill="#4c7be1" d="M0 0h12v4H0z" />
            <path fill="#ffd500" d="M0 4h12v4H0z" />
          </svg>
          <a href="#leaflet">Leaflet</a> | © <a href="#openstreetmap">OpenStreetMap</a> contributors
        </Attribution>
      </MapArea>
      <Content>
        <AddressBar>
          54.36.148.120
          <CopyButton type="button" aria-label="Copy IP address">
            <Clipboard size={20} />
          </CopyButton>
          <span>Malicious IP Score: 0%</span>
        </AddressBar>
        <SeenDates>
          <SeenItem>First seen: <strong>09.08.2024 19:00:52</strong></SeenItem>
          <SeenItem>Last Seen: <strong>13.09.2024 04:37:40</strong></SeenItem>
        </SeenDates>
        <Card>
          <CardTitle $iconColor="#f97316"><Server size={24} />General Information</CardTitle>
          <Rows rows={generalRows} />
        </Card>
        <Card>
          <CardTitle $iconColor="#4f6fe8"><Activity size={24} />Activity</CardTitle>
          <Rows rows={activityRows} />
        </Card>
        <Card>
          <CardTitle $iconColor="#ae2f2b"><ListIcon />Blocklists</CardTitle>
          <EmptyList name="Blocklists" />
        </Card>
        <Card>
          <CardTitle $iconColor="#3fb152"><CircleCheck size={24} />Whitelists</CardTitle>
          <EmptyList name="Whitelists" />
        </Card>
      </Content>
    </>
  );
}
